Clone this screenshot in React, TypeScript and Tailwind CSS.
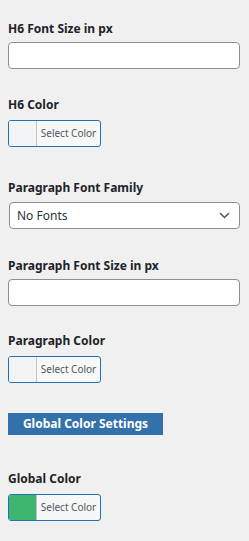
const font = { fontFamily: '"Noto Sans", "Open Sans", sans-serif' };

function Label({ children }: { children: React.ReactNode }) {
    return <div className="text-[12px] font-bold leading-[18px] text-[#1d2327]">{children}</div>;
}

function TextInput() {
    return <input type="text" className="mt-[4px] block w-[232px] h-[27px] rounded-[4px] border border-[#8c8f94] bg-white" />;
}

function ColorButton({ color }: { color: string }) {
    return (
        <button className="mt-[6px] flex h-[27px] w-[93px] overflow-hidden rounded-[3px] border border-[#2271b1] bg-[#f6f7f7]">
            <span style={{ backgroundColor: color }} className="h-full w-[28px] border-r border-[#c3c4c7]" />
            <span className="flex-1 text-center text-[10px] leading-[25px] text-[#50575e]">Select Color</span>
        </button>
    );
}

export default function App() {
    return (
        <div style={font} className="min-h-[541px] w-[249px] bg-[#f0f0f1] px-2 pt-[20px]">
            <Label>H6 Font Size in px</Label>
            <TextInput />

            <div className="mt-[27px]" />
            <Label>H6 Color</Label>
            <ColorButton color="#f3f4f6" />

            <div className="mt-[32px]" />
            <Label>Paragraph Font Family</Label>
            <div className="mt-[5px] ml-px flex h-[27px] w-[231px] items-center justify-between rounded-[4px] border border-[#8c8f94] bg-white pl-[7px] pr-[9px]">
                <span className="text-[12px] text-[#2c3338]">No Fonts</span>
                <svg width="11" height="7" viewBox="0 0 11 7" fill="none" stroke="#50575e" strokeWidth="1.5">
                    <path d="M1 1l4.5 4.5L10 1" />
                </svg>
            </div>

            <div className="mt-[28px]" />
            <Label>Paragraph Font Size in px</Label>
            <TextInput />

            <div className="mt-[26px]" />
            <Label>Paragraph Color</Label>
            <ColorButton color="#f3f4f6" />

            <div className="mt-[30px] flex h-[22px] w-[155px] items-center justify-center bg-[#3371aa] text-[12px] font-bold text-white">
                Global Color Settings
            </div>

            <div className="mt-[35px]" />
            <Label>Global Color</Label>
            <ColorButton color="#3db56f" />
        </div>
    );
}
